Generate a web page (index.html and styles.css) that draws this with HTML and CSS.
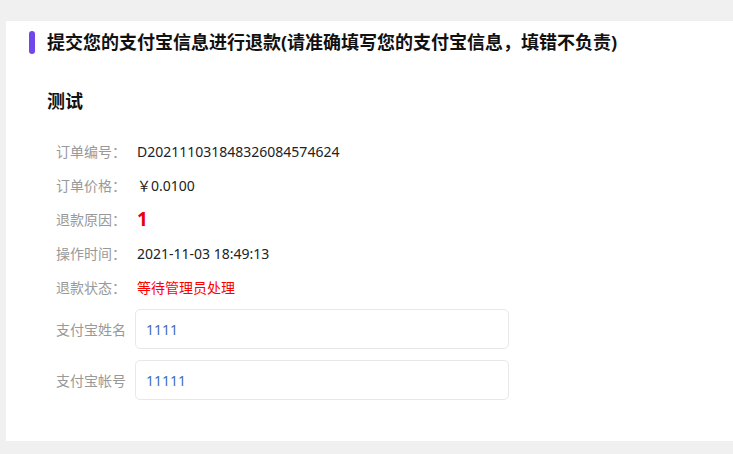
FILE: index.html
```html
<!DOCTYPE html>
<html lang="zh-CN">
<head>
    <meta charset="UTF-8" />
    <title>退款信息</title>
    <link rel="stylesheet" href="styles.css">
</head>
<body>

<div class="card">
    <h2 class="page-title">提交您的支付宝信息进行退款(请准确填写您的支付宝信息，填错不负责)</h2>

    <h3 class="goods-name">测试</h3>

    <div class="info">
        <div class="row">
            <span class="label">订单编号：</span>
            <span class="value">D202111031848326084574624</span>
        </div>
        <div class="row">
            <span class="label">订单价格：</span>
            <span class="value">￥0.0100</span>
        </div>
        <div class="row">
            <span class="label">退款原因：</span>
            <span class="value reason">1</span>
        </div>
        <div class="row">
            <span class="label">操作时间：</span>
            <span class="value">2021-11-03 18:49:13</span>
        </div>
        <div class="row">
            <span class="label">退款状态：</span>
            <span class="value status">等待管理员处理</span>
        </div>
    </div>

    <form class="refund-form">
        <label class="field">
            <span class="field-label">支付宝姓名</span>
            <input type="text" value="1111" />
        </label>
        <label class="field">
            <span class="field-label">支付宝帐号</span>
            <input type="text" value="11111" />
        </label>
    </form>
</div>

</body>
</html>
```

FILE: styles.css
```css
body {
    margin: 0;
    padding: 21px 0 14px 6px;
    background-color: #f0f0f0;
    font-family: "Noto Sans", "Noto Sans CJK SC", sans-serif;
    color: #222;
}

.card {
    background-color: #fff;
    padding: 9px 0 41px 0;
}

.page-title {
    display: flex;
    align-items: center;
    margin: 0 0 0 23px;
    font-size: 18px;
    line-height: 24px;
    font-weight: bold;
    color: #111;
}

.page-title::before {
    content: "";
    width: 6px;
    height: 23px;
    border-radius: 3px;
    background-color: #7047eb;
    margin-right: 12px;
}

.goods-name {
    margin: 35px 0 0 41px;
    font-size: 18px;
    line-height: 24px;
    font-weight: bold;
    color: #111;
}

.info {
    margin: 21px 0 0 50px;
}

.row {
    display: flex;
    align-items: center;
    height: 34px;
    font-size: 14px;
}

.label {
    width: 81px;
    color: #999;
}

.value {
    color: #222;
}

.reason {
    font-size: 19px;
    font-weight: bold;
    color: #e8000b;
}

.status {
    color: #f00;
}

.refund-form {
    margin: 5px 0 0 50px;
    display: flex;
    flex-direction: column;
    gap: 11px;
}

.field {
    display: flex;
    align-items: center;
    font-size: 14px;
}

.field-label {
    width: 79px;
    color: #999;
}

.field input {
    width: 374px;
    height: 40px;
    box-sizing: border-box;
    border: 1px solid #e8e8e8;
    border-radius: 5px;
    padding: 0 10px;
    font-family: inherit;
    font-size: 14px;
    color: #3d6fbf;
    outline: none;
}
```
